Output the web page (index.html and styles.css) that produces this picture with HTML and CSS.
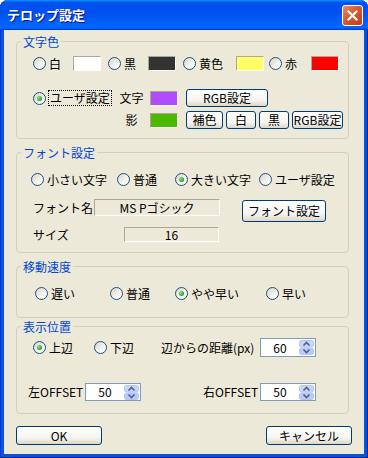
FILE: index.html
```html
<!doctype html>
<html>
<head>
	<title>テロップ設定</title>
	<meta charset="utf-8"/>
	<link rel="stylesheet" href="styles.css">
</head>
<body>
<div class="window">
	<div class="titlebar">
		<span class="title">テロップ設定</span>
		<span class="close">
			<svg width="13" height="13" viewBox="0 0 13 13"><path d="M2.5 2.5 L10.5 10.5 M10.5 2.5 L2.5 10.5" stroke="#fff" stroke-width="2.2" stroke-linecap="square"/></svg>
		</span>
	</div>
	<div class="client">
		<!-- text colour -->
		<fieldset class="group g-color">
			<legend>文字色</legend>
			<div class="preset">
				<label class="opt"><span class="radio"></span>白</label>
				<span class="swatch white"></span>
				<label class="opt"><span class="radio"></span>黒</label>
				<span class="swatch black"></span>
				<label class="opt"><span class="radio"></span>黄色</label>
				<span class="swatch yellow"></span>
				<label class="opt"><span class="radio"></span>赤</label>
				<span class="swatch red"></span>
			</div>
			<div class="custom">
				<label class="opt"><span class="radio on"></span><span class="focus">ユーザ設定</span></label>
				<span class="cap">文字</span>
				<span class="swatch purple"></span>
				<button class="btn rgb">RGB設定</button>
				<span class="cap shade">影</span>
				<span class="swatch green"></span>
				<div class="tools">
					<button class="btn t-comp">補色</button>
					<button class="btn t-white">白</button>
					<button class="btn t-black">黒</button>
					<button class="btn t-rgb">RGB設定</button>
				</div>
			</div>
		</fieldset>

		<!-- font -->
		<fieldset class="group g-font">
			<legend>フォント設定</legend>
			<div class="sizes">
				<label class="opt"><span class="radio"></span>小さい文字</label>
				<label class="opt"><span class="radio"></span>普通</label>
				<label class="opt"><span class="radio on"></span>大きい文字</label>
				<label class="opt"><span class="radio"></span>ユーザ設定</label>
			</div>
			<div class="fontinfo">
				<span class="cap">フォント名</span>
				<span class="field fname">MS Pゴシック</span>
				<button class="btn fontbtn">フォント設定</button>
				<span class="cap sizecap">サイズ</span>
				<span class="field fsize">16</span>
			</div>
		</fieldset>

		<!-- speed -->
		<fieldset class="group g-speed">
			<legend>移動速度</legend>
			<div class="speeds">
				<label class="opt"><span class="radio"></span>遅い</label>
				<label class="opt"><span class="radio"></span>普通</label>
				<label class="opt"><span class="radio on"></span>やや早い</label>
				<label class="opt"><span class="radio"></span>早い</label>
			</div>
		</fieldset>

		<!-- position -->
		<fieldset class="group g-pos">
			<legend>表示位置</legend>
			<div class="edge">
				<label class="opt"><span class="radio on"></span>上辺</label>
				<label class="opt"><span class="radio"></span>下辺</label>
				<span class="cap">辺からの距離(px)</span>
				<div class="spin">
					<span class="val">60</span>
					<svg class="arrows" width="15" height="15" viewBox="0 0 15 15">
						<rect x="0.5" y="0.5" width="14" height="6.5" rx="2" fill="#C6D5FC" stroke="#B2C5F5"/>
						<rect x="0.5" y="8" width="14" height="6.5" rx="2" fill="#B9CBF8" stroke="#B2C5F5"/>
						<path d="M4.5 5.5 L7.5 2.5 L10.5 5.5" fill="none" stroke="#4D6185" stroke-width="1.6"/>
						<path d="M4.5 9.5 L7.5 12.5 L10.5 9.5" fill="none" stroke="#4D6185" stroke-width="1.6"/>
					</svg>
				</div>
			</div>
			<div class="offsets">
				<span class="cap">左OFFSET</span>
				<div class="spin">
					<span class="val">50</span>
					<svg class="arrows" width="15" height="15" viewBox="0 0 15 15">
						<rect x="0.5" y="0.5" width="14" height="6.5" rx="2" fill="#C6D5FC" stroke="#B2C5F5"/>
						<rect x="0.5" y="8" width="14" height="6.5" rx="2" fill="#B9CBF8" stroke="#B2C5F5"/>
						<path d="M4.5 5.5 L7.5 2.5 L10.5 5.5" fill="none" stroke="#4D6185" stroke-width="1.6"/>
						<path d="M4.5 9.5 L7.5 12.5 L10.5 9.5" fill="none" stroke="#4D6185" stroke-width="1.6"/>
					</svg>
				</div>
				<span></span>
				<span class="cap">右OFFSET</span>
				<div class="spin">
					<span class="val">50</span>
					<svg class="arrows" width="15" height="15" viewBox="0 0 15 15">
						<rect x="0.5" y="0.5" width="14" height="6.5" rx="2" fill="#C6D5FC" stroke="#B2C5F5"/>
						<rect x="0.5" y="8" width="14" height="6.5" rx="2" fill="#B9CBF8" stroke="#B2C5F5"/>
						<path d="M4.5 5.5 L7.5 2.5 L10.5 5.5" fill="none" stroke="#4D6185" stroke-width="1.6"/>
						<path d="M4.5 9.5 L7.5 12.5 L10.5 9.5" fill="none" stroke="#4D6185" stroke-width="1.6"/>
					</svg>
				</div>
			</div>
		</fieldset>

		<div class="actions">
			<button class="btn">OK</button>
			<button class="btn">キャンセル</button>
		</div>
	</div>
</div>
</body>
</html>
```

FILE: styles.css
```css
*{
	box-sizing: border-box;
}
body{
	margin: 0;
	background-color: #fff;
	font-family: "MS UI Gothic", "Noto Sans CJK JP", sans-serif;
	font-size: 12px;
	line-height: 14px;
	color: #000;
}
.window{
	width: 368px;
	height: 458px;
	border-radius: 8px 8px 0 0;
	overflow: hidden;
	background-color: #0853DE;
	box-shadow: inset 1px 0 #0831D9, inset -1px 0 #001EA0, inset 0 -1px #001EA0;
}
.titlebar{
	height: 30px;
	display: flex;
	align-items: center;
	justify-content: space-between;
	padding: 0 5px 0 7px;
	background: linear-gradient(#0997FF, #0053EE 8%, #0050EE 40%, #0066FF 88%, #0066FF 93%, #005BFF 95%, #003DD7 96%, #003DD7);
}
.title{
	color: #fff;
	font-weight: bold;
	font-size: 13px;
	text-shadow: 1px 1px #0F1089;
}
.close{
	width: 21px;
	height: 21px;
	display: flex;
	align-items: center;
	justify-content: center;
	border: 1px solid #fff;
	border-radius: 3px;
	background: linear-gradient(135deg, #EC8B6A, #D8582F 45%, #C23E14);
}
.client{
	height: 424px;
	margin: 0 4px;
	padding-top: 5px;
	background-color: #ECE9D8;
}

/* group boxes */
.group{
	width: 333px;
	min-width: 0;
	margin: 0 0 0 12px;
	padding: 0 0 9px;
	border: 1px solid #D0D0BF;
	border-radius: 4px;
}
.group legend{
	margin-left: 4px;
	padding: 0 2px;
	color: #0046D5;
	line-height: 13px;
}
.g-font{
	margin-top: 7px;
	padding-bottom: 10px;
}
.g-speed{
	margin-top: 7px;
	padding-bottom: 15px;
}
.g-pos{
	margin-top: 2px;
	padding-bottom: 12px;
}

/* controls */
.opt{
	display: flex;
	align-items: center;
	gap: 3px;
	white-space: nowrap;
}
.radio{
	width: 13px;
	height: 13px;
	flex: none;
	display: flex;
	align-items: center;
	justify-content: center;
	border: 1px solid #1C5180;
	border-radius: 50%;
	background: linear-gradient(135deg, #D5D2C6 0%, #F3F2EC 55%, #fff 100%);
}
.radio.on::after{
	content: "";
	width: 5px;
	height: 5px;
	border-radius: 50%;
	background: radial-gradient(circle at 35% 35%, #8BE38B, #21A121 70%);
}
.focus{
	outline: 1px dotted #000;
	padding: 0 1px;
}
.swatch{
	width: 28px;
	height: 15px;
	border: 1px solid;
	border-color: #ACA899 #fff #fff #ACA899;
}
.white{ background-color: #fff; }
.black{ background-color: #333; }
.yellow{ background-color: #FFFF66; }
.red{ background-color: #FF0000; }
.purple{ background-color: #B04CFF; }
.green{ background-color: #4DB800; }
.btn{
	height: 18px;
	padding: 0;
	font: inherit;
	color: #000;
	white-space: nowrap;
	border: 1px solid #003C74;
	border-radius: 3px;
	background: linear-gradient(#fff, #F5F4EF 65%, #DAD6CA);
}
.field{
	border: 1px solid;
	border-color: #ACA899 #fff #fff #ACA899;
	text-align: center;
}
.cap{
	white-space: nowrap;
}

/* colour rows */
.preset{
	display: grid;
	grid-template-columns: 40px 35px 40px 35px 53px 33px 42px 28px;
	align-items: center;
	height: 17px;
	margin-top: 7px;
	padding-left: 16px;
}
.custom{
	display: grid;
	grid-template-columns: 86px 25px 42px auto;
	grid-template-rows: 18px 18px;
	row-gap: 4px;
	align-items: center;
	margin-top: 17px;
	padding-left: 16px;
}
.custom .cap{
	text-align: center;
}
.custom .swatch{
	margin-left: 6px;
}
.shade{
	grid-column: 2;
}
.rgb{
	width: 82px;
}
.tools{
	display: flex;
	gap: 3px;
}
.t-comp{ width: 37px; }
.t-white{ width: 30px; }
.t-black{ width: 30px; }
.t-rgb{ width: 51px; }

/* font rows */
.sizes{
	display: grid;
	grid-template-columns: 86px 58px 84px auto;
	align-items: center;
	height: 17px;
	margin-top: 12px;
	padding-left: 14px;
}
.fontinfo{
	display: grid;
	grid-template-columns: 61px 126px 22px 84px;
	grid-template-rows: 17px 15px;
	row-gap: 11px;
	align-items: center;
	margin-top: 11px;
	padding-left: 16px;
}
.fname{
	grid-column: 2;
	grid-row: 1;
	height: 17px;
	line-height: 15px;
}
.fontbtn{
	grid-column: 4;
	grid-row: 1 / span 2;
	align-self: start;
	margin-top: 1px;
	height: 22px;
}
.sizecap{
	grid-column: 1;
	grid-row: 2;
}
.fsize{
	grid-column: 2;
	grid-row: 2;
	width: 95px;
	height: 15px;
	margin-left: 30px;
	line-height: 13px;
}

/* speed row */
.speeds{
	display: grid;
	grid-template-columns: 75px 65px 91px auto;
	align-items: center;
	height: 17px;
	margin-top: 12px;
	padding-left: 18px;
}

/* position rows */
.edge{
	display: grid;
	grid-template-columns: 61px 67px 99px 56px;
	align-items: center;
	height: 19px;
	margin-top: 5px;
	padding-left: 16px;
}
.offsets{
	display: grid;
	grid-template-columns: 57px 56px 62px 57px 56px;
	align-items: center;
	height: 18px;
	margin-top: 26px;
	padding-left: 11px;
}
.spin{
	display: flex;
	align-items: center;
	height: 100%;
	padding-right: 1px;
	border: 1px solid #7F9DB9;
	background-color: #fff;
}
.spin .val{
	flex: 1;
	text-align: center;
}
.arrows{
	flex: none;
}

/* dialog buttons */
.actions{
	display: flex;
	justify-content: space-between;
	margin-top: 12px;
	padding: 0 12px;
}
.actions .btn{
	width: 86px;
	height: 19px;
}
```
